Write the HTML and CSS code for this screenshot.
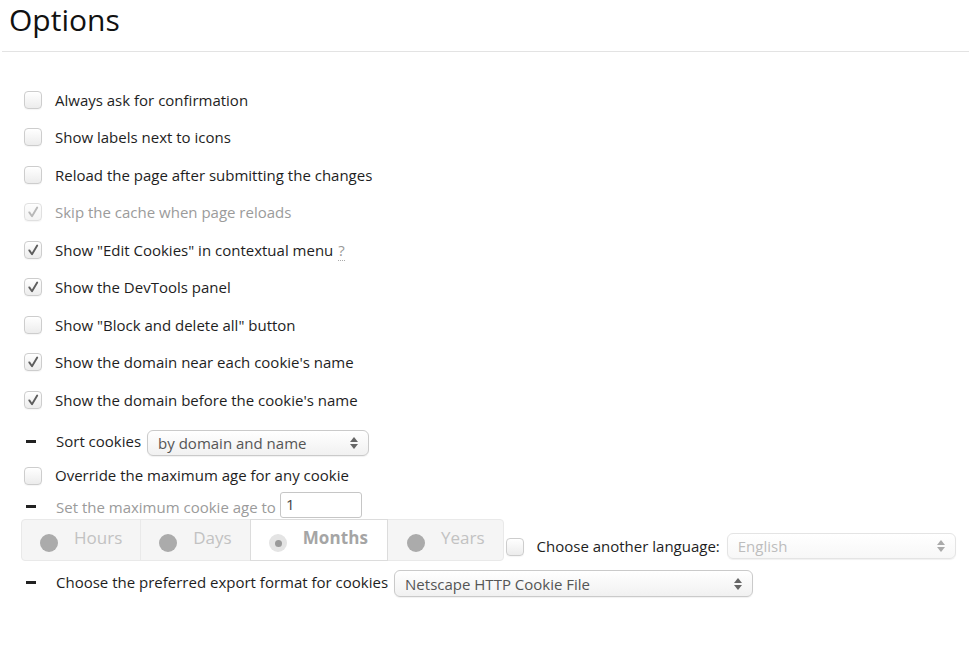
FILE: index.html
```html
<!DOCTYPE html>
<html>
<head>
<meta charset="utf-8">
<link rel="stylesheet" href="styles.css">
</head>
<body>
<h1 class="title">Options</h1>
<hr class="rule">
<div class="options">
  <div class="row"><span class="cb"></span><span class="label">Always ask for confirmation</span></div>
  <div class="row"><span class="cb"></span><span class="label">Show labels next to icons</span></div>
  <div class="row"><span class="cb"></span><span class="label">Reload the page after submitting the changes</span></div>
  <div class="row disabled"><span class="cb"><svg class="check" viewBox="0 0 16 16"><path d="M4.3 8.4 L7 12.3 L12.2 3.6"/></svg></span><span class="label">Skip the cache when page reloads</span></div>
  <div class="row"><span class="cb"><svg class="check" viewBox="0 0 16 16"><path d="M4.3 8.4 L7 12.3 L12.2 3.6"/></svg></span><span class="label">Show "Edit Cookies" in contextual menu <span class="help">?</span></span></div>
  <div class="row"><span class="cb"><svg class="check" viewBox="0 0 16 16"><path d="M4.3 8.4 L7 12.3 L12.2 3.6"/></svg></span><span class="label">Show the DevTools panel</span></div>
  <div class="row"><span class="cb"></span><span class="label">Show "Block and delete all" button</span></div>
  <div class="row"><span class="cb"><svg class="check" viewBox="0 0 16 16"><path d="M4.3 8.4 L7 12.3 L12.2 3.6"/></svg></span><span class="label">Show the domain near each cookie's name</span></div>
  <div class="row"><span class="cb"><svg class="check" viewBox="0 0 16 16"><path d="M4.3 8.4 L7 12.3 L12.2 3.6"/></svg></span><span class="label">Show the domain before the cookie's name</span></div>

  <div class="row sort-row"><span class="dash"></span><span class="label">Sort cookies</span>
    <div class="select sort-select"><span class="sel-text">by domain and name</span><span class="arrows"></span></div>
  </div>
  <div class="row override-row"><span class="cb"></span><span class="label">Override the maximum age for any cookie</span></div>
  <div class="row age-row"><span class="dash"></span><span class="label muted">Set the maximum cookie age to</span>
    <div class="text-input">1</div>
  </div>
  <div class="unit-row">
    <div class="segments">
      <div class="seg"><span class="radio"></span><span class="seg-label">Hours</span></div>
      <div class="seg"><span class="radio"></span><span class="seg-label">Days</span></div>
      <div class="seg selected"><span class="radio on"></span><span class="seg-label">Months</span></div>
      <div class="seg last"><span class="radio"></span><span class="seg-label">Years</span></div>
    </div>
    <div class="lang">
      <span class="cb"></span><span class="label lang-label">Choose another language:</span>
      <div class="select lang-select disabled-select"><span class="sel-text">English</span><span class="arrows"></span></div>
    </div>
  </div>
  <div class="row export-row"><span class="dash"></span><span class="label">Choose the preferred export format for cookies</span>
    <div class="select export-select"><span class="sel-text">Netscape HTTP Cookie File</span><span class="arrows"></span></div>
  </div>
</div>
</body>
</html>
```
FILE: styles.css
```css
html, body {
  margin: 0;
  padding: 0;
  background: #fff;
}
body {
  font-family: "Open Sans", "Noto Sans", sans-serif;
  color: #1e1e1e;
  font-size: 15px;
}
.title {
  margin: 0;
  padding: 1px 0 0 9px;
  font-size: 30px;
  font-weight: 400;
  line-height: 38px;
  color: #111;
}
.rule {
  margin: 12px 0 0 2px;
  border: 0;
  border-top: 1px solid #e3e3e3;
  height: 0;
}
.options {
  padding: 29px 0 0 24px;
}
.row {
  display: flex;
  align-items: center;
  height: 37.5px;
}
.label {
  line-height: 20px;
  white-space: nowrap;
}
.cb {
  box-sizing: border-box;
  width: 18px;
  height: 18px;
  border: 1px solid #cdcdcd;
  border-radius: 4px;
  background: linear-gradient(#ffffff, #ececec);
  box-shadow: inset 0 1px 1px rgba(255,255,255,0.8), 0 1px 1px rgba(0,0,0,0.04);
  margin-right: 13px;
  flex: none;
  position: relative;
}
.check {
  position: absolute;
  left: 0;
  top: 0;
  width: 16px;
  height: 16px;
  fill: none;
  stroke: #5e5e5e;
  stroke-width: 1.9;
  stroke-linecap: round;
  stroke-linejoin: round;
}
.disabled .cb {
  border-color: #e0e0e0;
  background: linear-gradient(#fdfdfd, #f3f3f3);
}
.disabled .check {
  stroke: #b8b8b8;
}
.disabled .label, .muted {
  color: #9b9b9b;
}
.help {
  color: #999;
  border-bottom: 1px dotted #aaa;
  margin-left: 1px;
}
.dash {
  width: 10px;
  height: 3px;
  background: #222;
  margin: 0 20px 0 2px;
  flex: none;
}
.sort-row {
  height: 46px;
}
.sort-row .label {
  margin-top: -2px;
}
.select {
  box-sizing: border-box;
  display: flex;
  align-items: center;
  border: 1px solid #cacaca;
  border-radius: 6px;
  background: linear-gradient(#ffffff, #f1f1f1);
  box-shadow: 0 1px 1px rgba(0,0,0,0.06);
  padding: 0 10px 0 10px;
  color: #555;
  flex: none;
}
.sel-text {
  flex: 1;
  white-space: nowrap;
  line-height: 20px;
}
.arrows {
  width: 8px;
  height: 12px;
  position: relative;
}
.arrows::before, .arrows::after {
  content: "";
  position: absolute;
  left: 0;
  border-left: 4px solid transparent;
  border-right: 4px solid transparent;
}
.arrows::before {
  top: 0;
  border-bottom: 5px solid #666;
}
.arrows::after {
  bottom: 0;
  border-top: 5px solid #666;
}
.sort-select {
  width: 222px;
  height: 26px;
  margin-left: 6px;
  margin-top: 2px;
}
.override-row {
  height: 22px;
}
.override-row .label {
  margin-top: -1px;
}
.age-row {
  height: 32px;
  align-items: flex-end;
}
.age-row .dash {
  margin-bottom: 11px;
}
.age-row .label {
  margin-bottom: 2px;
}
.text-input {
  box-sizing: border-box;
  width: 82px;
  height: 26px;
  border: 1px solid #c6c6c6;
  border-radius: 3px;
  margin-left: 4px;
  padding: 1px 5px;
  line-height: 20px;
  color: #444;
  background: #fff;
  margin-bottom: 1px;
}
.unit-row {
  display: flex;
  align-items: flex-end;
  height: 42px;
  margin-left: -3px;
}
.segments {
  display: flex;
  height: 42px;
  box-sizing: border-box;
  border: 1px solid #e9e9e9;
  border-radius: 4px;
  background: #f5f5f5;
}
.seg {
  display: flex;
  align-items: center;
  padding: 0 18px 0 18px;
  border-right: 1px solid #e9e9e9;
  gap: 16px;
}
.seg.last {
  border-right: 0;
  padding-left: 19px;
}
.seg.selected {
  background: #fff;
  border: 1px solid #dcdcdc;
  margin: -1px 0 -1px -1px;
  padding-right: 19px;
}
.radio {
  width: 18px;
  height: 18px;
  border-radius: 50%;
  background: #ababab;
  margin-top: 6px;
  flex: none;
  position: relative;
}
.radio.on {
  background: #e4e4e4;
}
.radio.on::after {
  content: "";
  position: absolute;
  left: 6px;
  top: 6px;
  width: 7px;
  height: 7px;
  border-radius: 50%;
  background: #9a9a9a;
}
.seg-label {
  font-size: 17px;
  line-height: 20px;
  color: #c2c2c2;
  margin-top: -4px;
}
.seg.selected .seg-label {
  font-weight: 700;
  color: #a5a5a5;
  letter-spacing: 0.1px;
}
.lang {
  display: flex;
  align-items: center;
  margin-left: 2px;
  margin-bottom: 2px;
}
.lang .cb {
  margin-right: 13px;
  margin-top: 3px;
}
.lang-label {
  margin-top: 1px;
}
.lang-select {
  width: 229px;
  height: 26px;
  margin-left: 7px;
}
.disabled-select {
  border-color: #e4e4e4;
  color: #bdbdbd;
  background: linear-gradient(#ffffff, #f7f7f7);
}
.disabled-select .arrows::before {
  border-bottom-color: #aaa;
}
.disabled-select .arrows::after {
  border-top-color: #aaa;
}
.export-row {
  height: 44px;
}
.export-row .label {
  margin-top: -2px;
}
.export-select {
  width: 359px;
  height: 27px;
  margin-left: 6px;
  margin-top: 2px;
}
```
